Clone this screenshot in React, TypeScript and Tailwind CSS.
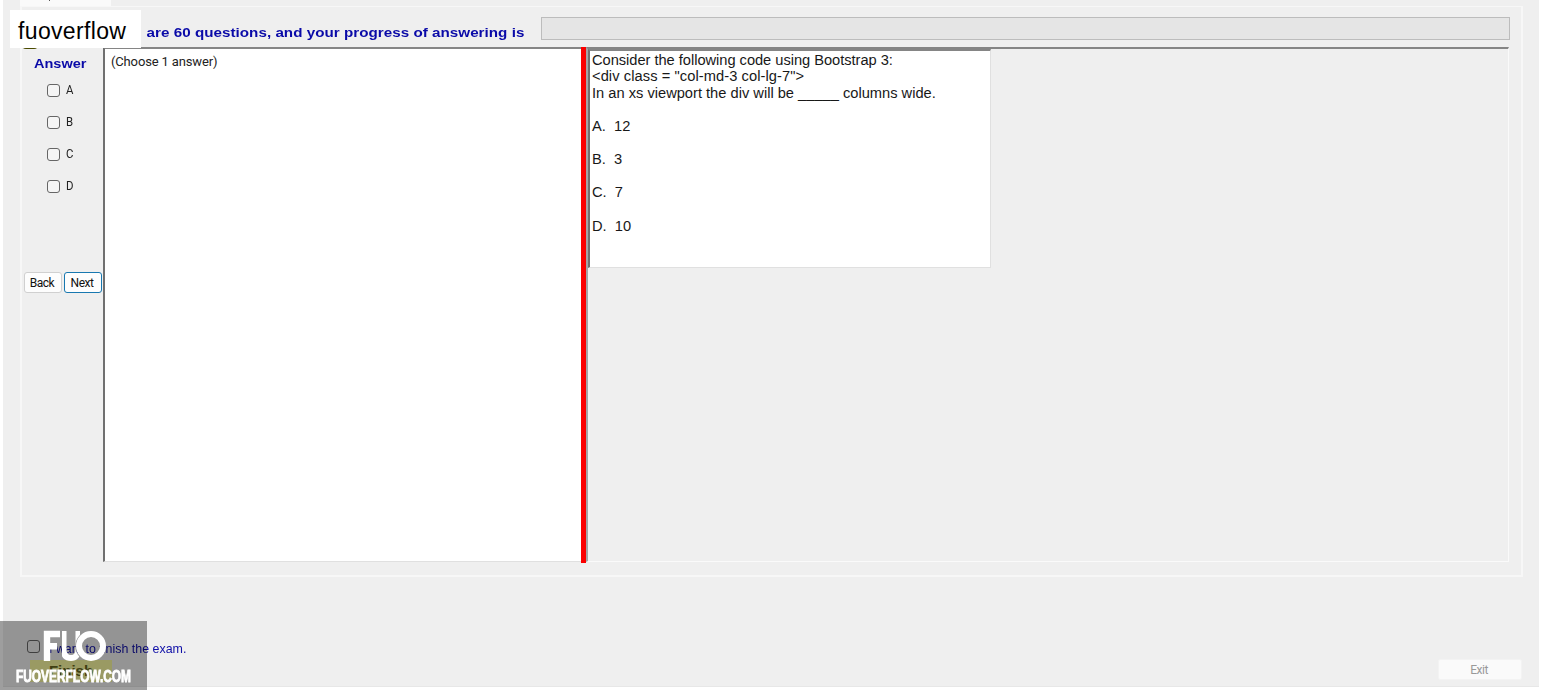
import React from "react";

function AnswerOption({ label }: { label: string }) {
  return (
    <label className="flex h-8 items-center pl-[25px]">
      <span className="size-[13px] rounded-[3px] border border-[#666] bg-[#f5f5f5]" />
      <span className="ml-[6px] origin-left scale-x-[0.95] font-[Roboto,sans-serif] text-[12px] leading-none text-[#222]">{label}</span>
    </label>
  );
}

function Header() {
  return (
    <header className="flex h-[40px] shrink-0 items-start">
      <div className="flex w-[519px] justify-end pt-[17px] pr-[16.5px]">
        <span className="origin-right scale-x-[1.14] whitespace-nowrap text-[13.33px] font-bold leading-[18px] tracking-[0.02px] text-[#0a0aa8]">
          are 60 questions, and your progress of answering is
        </span>
      </div>
      <div className="mt-[10px] h-[23px] w-[969px] border border-[#bcbcbc] bg-[#e5e5e5]" />
    </header>
  );
}

function AnswerColumn() {
  return (
    <aside className="flex w-[81px] shrink-0 flex-col">
      <h2 className="ml-[12px] origin-left scale-x-[1.09] pt-[8px] text-[13.33px] font-bold leading-[18px] text-[#0a0aa8]">Answer</h2>
      <div className="mt-px">
        <AnswerOption label="A" />
        <AnswerOption label="B" />
        <AnswerOption label="C" />
        <AnswerOption label="D" />
      </div>
      <div className="mt-[70px] flex gap-[2px] pl-[2px] font-[Roboto,sans-serif] text-[12px] tracking-[-0.5px] text-[#111]">
        <button className="h-[21px] w-[38px] rounded-[3px] border border-[#d0d0d0] bg-[#fdfdfd] pr-[2px] leading-none">Back</button>
        <button className="h-[21px] w-[38px] rounded-[3px] border border-[#1878b0] bg-[#fdfdfd] pr-[2px] leading-none">Next</button>
      </div>
    </aside>
  );
}

function Question() {
  return (
    <div className="h-[219px] w-[403px] border-t-2 border-r border-b border-l-2 border-t-[#858585] border-r-[#e0e0e0] border-b-[#e0e0e0] border-l-[#707070] bg-white pt-px pl-[2px] text-[14.67px] leading-[16.6px] whitespace-pre text-[#181818]">
      <p className="tracking-[-0.03px]">Consider the following code using Bootstrap 3:</p>
      <p className="-mt-[0.6px] mb-[0.6px] tracking-[0.08px]">{'<div class = "col-md-3 col-lg-7">'}</p>
      <p>In an xs viewport the div will be _____ columns wide.</p>
      <p className="mt-[16.6px]">A.  12</p>
      <p className="mt-[16.4px]">B.  3</p>
      <p className="mt-[16px]">C.  7</p>
      <p className="mt-[17.4px]">D.  10</p>
    </div>
  );
}

function Watermark() {
  return (
    <div className="absolute top-[621px] left-0 h-[69px] w-[147px] bg-black/[0.38]">
      <svg className="absolute top-[9px] left-[43px]" width="64" height="32" viewBox="0 0 64 32" fill="none">
        <mask id="letter-gap">
          <rect width="64" height="32" fill="white" />
          <circle cx="48" cy="16" r="15.7" fill="black" />
        </mask>
        <path d="M4 31V4H17M4 16.3H14" stroke="white" strokeWidth="6.4" />
        <path d="M20.5 1V19C20.5 26 24 28 28 28C32 28 35.5 25 35.5 19V1" stroke="white" strokeWidth="6" mask="url(#letter-gap)" />
        <circle cx="48" cy="16" r="12" stroke="white" strokeWidth="6" />
      </svg>
      <div className="absolute top-[46px] left-[16px] origin-left scale-x-[0.7] text-[17px] leading-[20px] font-bold whitespace-nowrap text-white [-webkit-text-stroke:0.9px_white]">
        FUOVERFLOW.COM
      </div>
    </div>
  );
}

export default function App() {
  return (
    <div className="relative h-[690px] w-full overflow-hidden bg-white pr-[3px] pl-[3px] font-['Liberation_Sans',Arial,sans-serif]">
      <main className="flex h-[687px] flex-col border-b border-[#e7e7e7] bg-[#efefef] pl-[17px]">
        <div className="h-[6px] w-[91px] shrink-0 bg-[#fafafa] pl-[29px]">
          <div className="h-px w-px bg-[#555]" />
        </div>
        <section className="flex h-[571px] w-[1503px] shrink-0 flex-col border-2 border-t border-[#f7f7f7]">
          <Header />
          <div className="flex h-[516px]">
            <AnswerColumn />
            <div className="h-[515px] w-[478px] border-t-2 border-b border-l-2 border-t-[#858585] border-b-[#e0e0e0] border-l-[#707070] bg-white pt-[4px] pl-[6px] font-[Roboto,sans-serif] text-[13px] leading-[17px] tracking-[-0.15px] text-[#222]">
              (Choose 1 answer)
            </div>
            <div className="h-[516px] w-[5px] bg-[#fa0000]" />
            <div className="h-[515px] w-[923px] border-t-2 border-r border-b border-l-2 border-t-[#858585] border-r-[#fafafa] border-b-[#fafafa] border-l-[#a5a5a5]">
              <Question />
            </div>
          </div>
        </section>
        <footer className="flex flex-1 justify-between">
          <div className="pt-[63px] pl-[7px]">
            <label className="flex h-[17px] items-center text-[13.33px] text-[#1010a8]">
              <span className="-mt-[5px] size-[13px] rounded-[3px] border border-[#666]" />
              <span className="ml-[9px] origin-left scale-x-[0.932] whitespace-nowrap">I want to finish the exam.</span>
            </label>
            <button className="mt-[3px] ml-[3px] h-[22px] w-[82px] bg-[#f8f8a0] pb-[2px] text-[15px] leading-none font-bold text-[#666620]">Finish</button>
          </div>
          <button className="mt-[82px] mr-[17px] h-[21px] w-[84px] rounded-[2px] border border-[#f3f3f3] bg-[#fafafa] pr-[2px] font-[Roboto,sans-serif] text-[12px] leading-none tracking-[-0.5px] text-[#999]">Exit</button>
        </footer>
      </main>
      <div className="absolute top-[45px] left-[22px] h-[4px] w-[16px] rounded-b-full bg-[#4a4a00]" />
      <div className="absolute top-[10px] left-[10px] h-[38px] w-[131px] bg-white pt-[9px] pl-[8px] text-[23px] leading-[25px] tracking-[0.35px] text-black">
        fuoverflow
      </div>
      <Watermark />
    </div>
  );
}
